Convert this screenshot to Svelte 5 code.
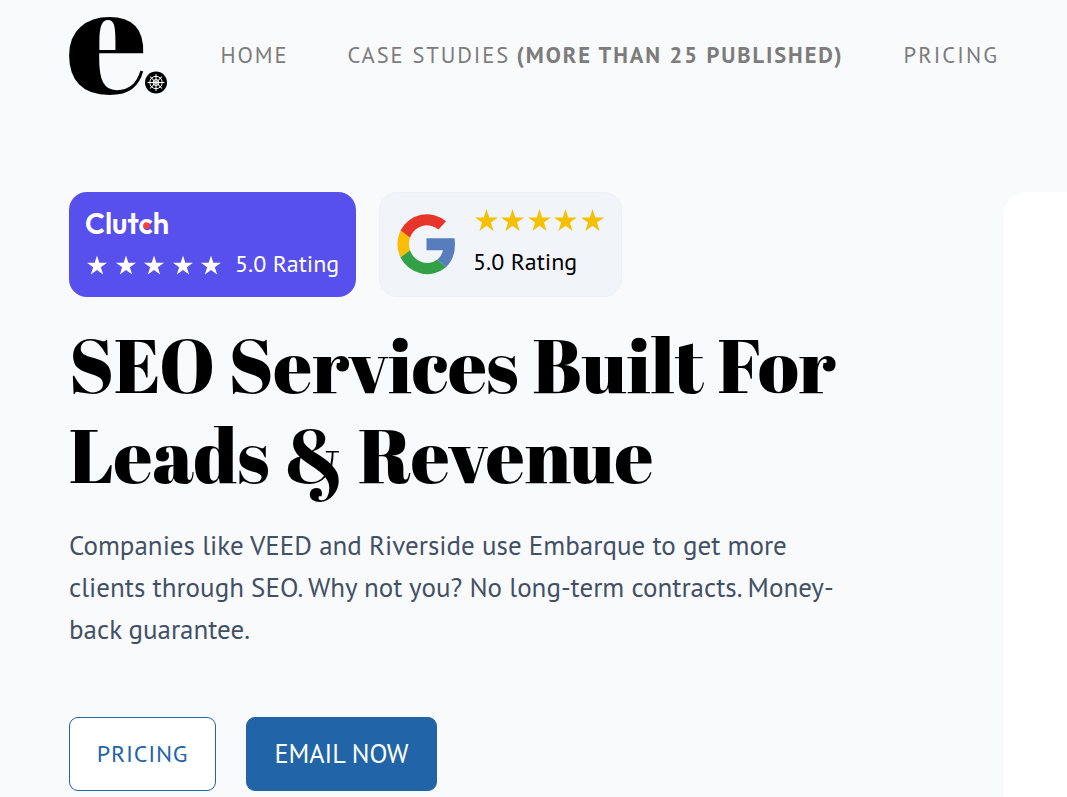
<script lang="ts">
	type NavItem = {
		label: string,
		strong?: string,
		key: string,
	}

	const nav: NavItem[] = [
		{ label: 'HOME', key: 'home' },
		{ label: 'CASE STUDIES', strong: '(MORE THAN 25 PUBLISHED)', key: 'cases' },
		{ label: 'PRICING', key: 'pricing' },
	]

	const stars = [0, 1, 2, 3, 4]
	const spokes = [0, 45, 90, 135]
</script>

{#snippet star()}
	<svg class="star" viewBox="0 0 24 23">
		<polygon points="12,0 14.8,8.8 24,8.8 16.6,14.2 19.4,23 12,17.6 4.6,23 7.4,14.2 0,8.8 9.2,8.8" />
	</svg>
{/snippet}

<div class="page">
	<header>
		<svg class="logo" viewBox="0 0 98 79">
			<text class="mark" x="-2.300" y="75.500">e</text>
			<circle cx="87" cy="65.500" r="11" />
			<g class="wheel">
				<circle cx="87" cy="65.500" r="6.200" />
				<circle cx="87" cy="65.500" r="3" />
				{#each spokes as angle}
					<line x1="78.500" y1="65.500" x2="95.500" y2="65.500" transform="rotate({angle} 87 65.5)" />
				{/each}
			</g>
		</svg>
		<nav>
			{#each nav as item}
				<a href="#{item.key}" class={item.key}>
					<span>{item.label}</span>{#if item.strong}<b>{item.strong}</b>{/if}
				</a>
			{/each}
		</nav>
	</header>

	<main>
		<section class="content">
			<div class="badges">
				<div class="badge clutch">
					<svg class="clutchLogo" viewBox="0 0 84 28">
						<text x="-1" y="26" textLength="84" lengthAdjust="spacingAndGlyphs">Clutch</text>
						<circle cx="60.500" cy="17.500" r="3.200" />
					</svg>
					<div class="row">
						<div class="stars">
							{#each stars as s}{@render star()}{/each}
						</div>
						<span class="rating">5.0 Rating</span>
					</div>
				</div>
				<div class="badge google">
					<svg class="googleLogo" viewBox="0 0 58 60" preserveAspectRatio="none">
						<path fill="#e63529" d="M3.500 17 A30 30 0 0 1 49 8 L41.500 16 A18 18 0 0 0 13 24 Z" />
						<path fill="#fbbc05" d="M3.500 17 A30 30 0 0 0 3.500 43 L13 36 A18 18 0 0 1 13 24 Z" />
						<path fill="#32a047" d="M3.500 43 A30 30 0 0 0 49 52.500 L40.500 45 A18 18 0 0 1 13 36 Z" />
						<path fill="#587dbd" d="M29.500 24.500 H57.500 Q60 42 49 52.500 L40.500 45 Q45 41 46 36 H29.500 Z" />
					</svg>
					<div class="score">
						<div class="stars">
							{#each stars as s}{@render star()}{/each}
						</div>
						<span class="rating">5.0 Rating</span>
					</div>
				</div>
			</div>

			<h1>SEO Services Built For Leads &amp; Revenue</h1>

			<p>
				Companies like VEED and Riverside use Embarque to get more
				clients through SEO. Why not you? No long-term contracts.
				Money-back guarantee.
			</p>

			<div class="actions">
				<button class="outline" type="button">PRICING</button>
				<button class="solid" type="button">EMAIL NOW</button>
			</div>
		</section>
		<aside></aside>
	</main>
</div>

<style>
	:global(body) {
		background: #f9fafc;
		overflow: hidden;
	}
	.page {
		width: 1067px;
		height: 797px;
		overflow: hidden;
		background: #f9fafc;
		font-family: 'PT Sans', 'Noto Sans', sans-serif;
	}
	header {
		display: flex;
		align-items: flex-start;
		height: 192px;
		padding-left: 69px;
		box-sizing: border-box;
	}
	.logo {
		width: 98px;
		height: 79px;
		margin-top: 17px;
		overflow: visible;
		flex-shrink: 0;
	}
	.mark {
		font-family: 'Abril Fatface', 'Liberation Serif', serif;
		font-size: 156px;
	}
	.wheel {
		fill: none;
		stroke: #fff;
		stroke-width: 1;
	}
	nav {
		display: flex;
		padding: 39px 0 0 53.500px;
		white-space: nowrap;
	}
	nav a {
		display: flex;
		gap: 6.500px;
		color: #7c7c7c;
		font-size: 22.500px;
		line-height: 32px;
		letter-spacing: 1.900px;
		text-decoration: none;
	}
	.home {
		width: 127px;
	}
	.cases {
		width: 556px;
	}
	.pricing {
		letter-spacing: 2.100px;
	}
	main {
		display: flex;
		height: 605px;
	}
	.content {
		width: 934px;
		padding-left: 69px;
		flex-shrink: 0;
	}
	aside {
		flex: 1;
		background: #fff;
		border-radius: 24px 0 0 0;
	}
	.badges {
		display: flex;
		gap: 23px;
	}
	.badge {
		height: 105px;
		border-radius: 18px;
		box-sizing: border-box;
	}
	.clutch {
		width: 287px;
		padding: 16px 0 0 17px;
		background: #5850ec;
		color: #fff;
	}
	.clutchLogo {
		display: block;
		width: 84px;
		height: 28px;
		overflow: visible;
	}
	.clutchLogo text {
		font-family: Outfit, Jost, Poppins, Lato, sans-serif;
		font-size: 31px;
		font-weight: 600;
		fill: #fff;
	}
	.clutchLogo circle {
		fill: #ff3d2e;
	}
	.row {
		display: flex;
		align-items: center;
		gap: 14px;
		height: 32px;
		margin-top: 12px;
	}
	.stars {
		display: flex;
	}
	.star {
		display: block;
		fill: currentColor;
	}
	.clutch .stars {
		gap: 8.500px;
		padding: 1px 0 0 1px;
	}
	.clutch .star {
		width: 20px;
		height: 20px;
	}
	.rating {
		font-size: 24px;
		line-height: 32px;
		white-space: nowrap;
	}
	.google {
		display: flex;
		width: 243px;
		padding: 17px 0 0 17px;
		background: #f1f4f9;
		border: 1px solid #edf0f6;
	}
	.googleLogo {
		width: 58px;
		height: 62px;
		margin-top: 3px;
		overflow: visible;
	}
	.score {
		padding-left: 19px;
	}
	.google .stars {
		gap: 3.400px;
		margin: -1px 0 0 1px;
		color: #f5c000;
	}
	.google .star {
		width: 23px;
		height: 22px;
	}
	.google .rating {
		display: block;
		margin: 15px 0 0 -1px;
		color: #000;
	}
	h1 {
		width: 800px;
		margin: 23px 0 0;
		font-family: 'Abril Fatface', 'Liberation Serif', serif;
		font-size: 75px;
		line-height: 90px;
		font-weight: 400;
	}
	p {
		width: 775px;
		margin: 24px 0 0;
		color: #425066;
		font-size: 27px;
		line-height: 42px;
	}
	.actions {
		display: flex;
		gap: 30px;
		margin-top: 67px;
	}
	button {
		height: 74px;
		padding: 0 0 2px;
		border: 1px solid #2165a8;
		border-radius: 9px;
		font-family: inherit;
	}
	.outline {
		width: 147px;
		background: #fff;
		color: #2165a8;
		font-size: 24px;
		letter-spacing: 0.750px;
	}
	.solid {
		width: 191px;
		background: #2165a8;
		color: #fff;
		font-size: 26.250px;
	}
</style>
